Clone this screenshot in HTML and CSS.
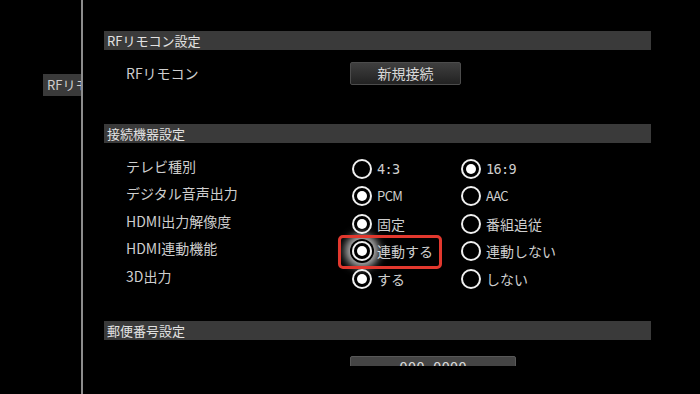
FILE: index.html
```html
<!DOCTYPE html>
<html lang="ja">
<head>
  <meta charset="UTF-8" />
  <title>接続機器設定</title>
  <link rel="stylesheet" href="styles.css">
</head>
<body>
  <div class="screen">
    <aside class="side">
      <div class="side-tab">RFリモコン</div>
    </aside>

    <main class="panel">
      <section class="group">
        <h2 class="group-title">RFリモコン設定</h2>
        <div class="row row-button">
          <span class="label">RFリモコン</span>
          <button class="btn">新規接続</button>
        </div>
      </section>

      <section class="group group-devices">
        <h2 class="group-title">接続機器設定</h2>
        <div class="rows">
          <div class="row">
            <span class="label">テレビ種別</span>
            <span class="option"><span class="radio"></span><span class="mono">4:3</span></span>
            <span class="option"><span class="radio on"></span><span class="mono">16:9</span></span>
          </div>
          <div class="row">
            <span class="label">デジタル音声出力</span>
            <span class="option"><span class="radio on"></span><span class="latin">PCM</span></span>
            <span class="option"><span class="radio"></span><span class="latin">AAC</span></span>
          </div>
          <div class="row">
            <span class="label">HDMI出力解像度</span>
            <span class="option"><span class="radio on"></span><span>固定</span></span>
            <span class="option"><span class="radio"></span><span>番組追従</span></span>
          </div>
          <div class="row">
            <span class="label">HDMI連動機能</span>
            <span class="option focus"><span class="radio on"></span><span>連動する</span></span>
            <span class="option"><span class="radio"></span><span>連動しない</span></span>
          </div>
          <div class="row">
            <span class="label">3D出力</span>
            <span class="option"><span class="radio on"></span><span>する</span></span>
            <span class="option"><span class="radio"></span><span>しない</span></span>
          </div>
        </div>
      </section>

      <section class="group group-zip">
        <h2 class="group-title">郵便番号設定</h2>
        <div class="row row-button">
          <span class="label"></span>
          <button class="btn btn-wide">000-0000</button>
        </div>
      </section>
    </main>
  </div>
</body>
</html>
```

FILE: styles.css
```css
body {
  margin: 0;
  background: #000;
  color: #cecece;
  font-family: "Noto Sans CJK JP", "Noto Sans", sans-serif;
  height: 394px;
  overflow: hidden;
}

.screen {
  display: flex;
  height: 394px;
}

/* left menu column */
.side {
  width: 81px;
  flex: none;
  border-right: 2px solid #8c8c8c;
}

.side-tab {
  margin: 74px 0 0 43px;
  height: 22px;
  line-height: 22px;
  padding-left: 4px;
  background: #3a3a3a;
  font-size: 13px;
  color: #cfcfcf;
  white-space: nowrap;
  overflow: hidden;
}

/* settings panel */
.panel {
  width: 547px;
  height: 335px;
  padding: 31px 0 0 21px;
  overflow: hidden;
}

.group-title {
  margin: 0;
  height: 19px;
  line-height: 19px;
  padding-left: 3px;
  background: #3a3a3a;
  font-size: 13px;
  font-weight: normal;
  color: #e2e2e2;
}

.group-devices {
  margin-top: 39px;
}

.group-zip {
  margin-top: 28.5px;
}

.rows {
  padding-top: 12px;
}

.row {
  display: grid;
  grid-template-columns: 226px 109px auto;
  justify-items: start;
  align-items: center;
  height: 27.5px;
  padding-left: 22px;
  font-size: 14px;
}

.row-button {
  grid-template-columns: 224px auto;
  height: 23px;
  margin-top: 12px;
}

.group-zip .row-button {
  margin-top: 16px;
}

.label {
  line-height: 16px;
  padding-bottom: 6px;
  white-space: nowrap;
}

.row-button .label {
  padding-bottom: 2px;
}

.btn {
  width: 111px;
  height: 23px;
  padding: 0;
  border: 1px solid #4c4c4c;
  border-radius: 2px;
  background: linear-gradient(#3f3f3f, #222);
  color: #d8d8d8;
  font-family: inherit;
  font-size: 14px;
  line-height: 21px;
}

.btn-wide {
  width: 166px;
  background: #444;
  border-color: #585858;
  font-family: "DejaVu Sans Mono", monospace;
}

/* radio options */
.option {
  position: relative;
  display: flex;
  align-items: center;
  gap: 5px;
  line-height: 16px;
  white-space: nowrap;
}

.radio {
  position: relative;
  flex: none;
  width: 16px;
  height: 16px;
  border: 2px solid #f0f0f0;
  border-radius: 50%;
}

.radio.on::after {
  content: "";
  position: absolute;
  inset: 3px;
  background: #fff;
  border-radius: 50%;
}

.mono {
  font-family: "DejaVu Sans Mono", monospace;
  font-size: 13.5px;
  letter-spacing: -0.6px;
}

.latin {
  font-size: 13px;
  letter-spacing: -0.6px;
}

.focus .radio {
  box-shadow: 0 0 0 2px #000, 0 0 9px 7px rgba(255, 255, 255, 0.7);
}

.focus::after {
  content: "";
  position: absolute;
  top: -6px;
  bottom: -8px;
  left: -14px;
  right: -9px;
  border: 3px solid #e2382e;
  border-radius: 5px;
}
```
